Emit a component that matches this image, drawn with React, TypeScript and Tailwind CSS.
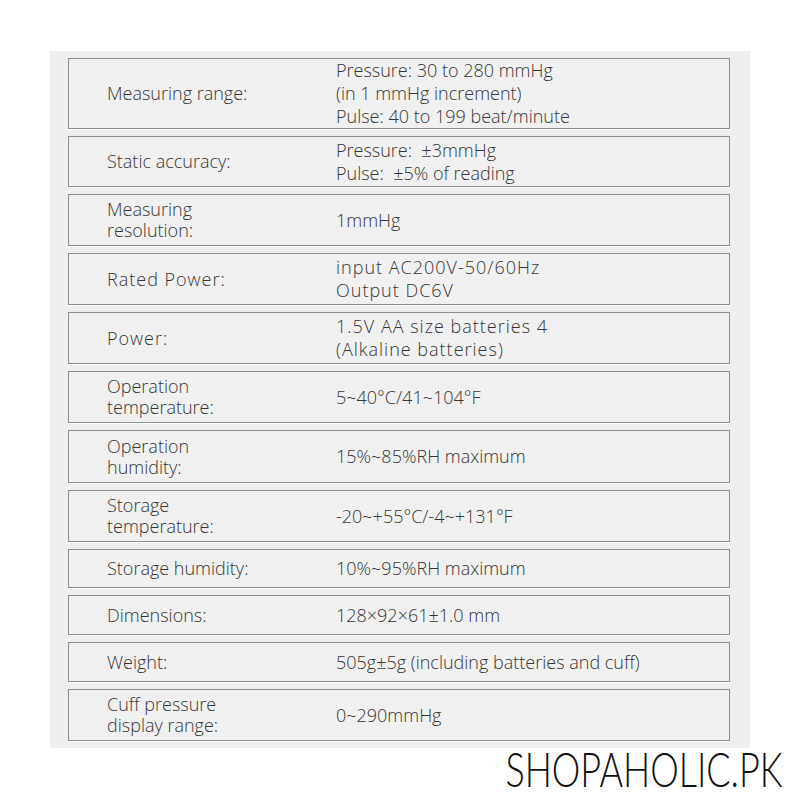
const rows: { label: string; value: string; h: string; wide?: boolean }[] = [
  {
    label: 'Measuring range:',
    value: 'Pressure: 30 to 280 mmHg\n(in 1 mmHg increment)\nPulse: 40 to 199 beat/minute',
    h: 'h-[71px]',
  },
  { label: 'Static accuracy:', value: 'Pressure:  ±3mmHg\nPulse:  ±5% of reading', h: 'h-[51px]' },
  { label: 'Measuring\nresolution:', value: '1mmHg', h: 'h-[52px]' },
  { label: 'Rated Power:', value: 'input AC200V-50/60Hz\nOutput DC6V', h: 'h-[52px]', wide: true },
  { label: 'Power:', value: '1.5V AA size batteries 4\n(Alkaline batteries)', h: 'h-[52px]', wide: true },
  { label: 'Operation\ntemperature:', value: '5~40°C/41~104°F', h: 'h-[52px]' },
  { label: 'Operation\nhumidity:', value: '15%~85%RH maximum', h: 'h-[53px]' },
  { label: 'Storage\ntemperature:', value: '-20~+55°C/-4~+131°F', h: 'h-[52px]' },
  { label: 'Storage humidity:', value: '10%~95%RH maximum', h: 'h-[39px]' },
  { label: 'Dimensions:', value: '128×92×61±1.0 mm', h: 'h-[40px]' },
  { label: 'Weight:', value: '505g±5g (including batteries and cuff)', h: 'h-[40px]' },
  { label: 'Cuff pressure\ndisplay range:', value: '0~290mmHg', h: 'h-[52px]' },
];

export default function App() {
  return (
    <div className="w-[800px] h-[800px] bg-white pt-[51px] pl-[50px] overflow-hidden font-['Open_Sans',sans-serif] font-light text-[#363636]">
      {/* Spec panel */}
      <div className="w-[700px] h-[697px] bg-[#efefef] pt-[7px] pl-[18px] pr-[20px] flex flex-col gap-[7px]">
        {rows.map((row, i) => (
          <div
            key={i}
            className={`${row.h} shrink-0 border border-[#8e8e8e] bg-[#f1f1f1] flex items-center pl-[38px] shadow-[0_1px_0_#ffffff]`}
          >
            <div className={`w-[229px] text-[18px] leading-[21px] whitespace-pre ${row.wide ? 'tracking-[1px]' : ''}`}>
              {row.label}
            </div>
            <div className={`text-[18px] leading-[23px] whitespace-pre ${row.wide ? 'tracking-[1px]' : ''}`}>
              {row.value}
            </div>
          </div>
        ))}
      </div>

      {/* Watermark */}
      <div className="w-[733px] flex justify-end mt-[-3px]">
        <div className="font-['Lato',sans-serif] font-light text-[48px] leading-[48px] text-[#111111] scale-x-[0.75] origin-right">
          SHOPAHOLIC.PK
        </div>
      </div>
    </div>
  );
}
